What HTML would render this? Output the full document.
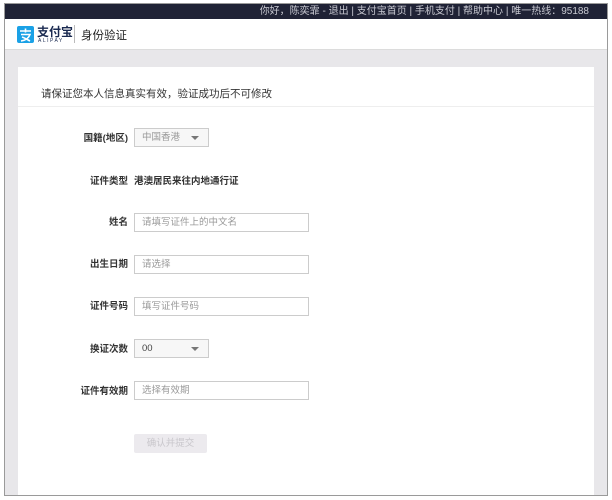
<!DOCTYPE html>
<html><head><meta charset="utf-8"><style>
*{margin:0;padding:0;box-sizing:border-box}
body{width:612px;height:500px;background:#fff;font-family:"Liberation Sans","Noto Sans CJK SC",sans-serif;position:relative;overflow:hidden}
.frame{position:absolute;left:4px;top:3px;width:604px;height:493px;border:1px solid #9a9a9a;background:#e8e7ea;overflow:hidden}
.top{position:absolute;left:0;top:0;width:100%;height:15px;background:#1f2235;color:#c9cad2;font-size:10px;line-height:15px;text-align:right;padding-right:18px}
.hdr{position:absolute;left:0;top:15px;width:100%;height:31px;background:#fff;border-bottom:1px solid #dcdcdc}
.card{position:absolute;left:13px;top:63px;width:576px;height:440px;background:#fff}
.tip{position:absolute;left:23px;top:19px;font-size:10.5px;color:#333}
.line{position:absolute;left:0;top:39px;width:100%;border-top:1px solid #eee}
.lab{position:absolute;right:466px;font-size:9.5px;color:#333;font-weight:bold;white-space:nowrap}
.in{position:absolute;left:116px;height:19px;border:1px solid #ccc;font-size:9.5px;color:#999;line-height:17px;padding-left:7px}
.sel{width:75px;background:#f7f7f7}
.sel:after{content:"";position:absolute;right:9px;top:7px;border:4px solid transparent;border-top:4px solid #777}
.txt{width:175px}
</style></head><body>
<div class="frame">
<div class="top">你好，陈奕霏 - 退出 | 支付宝首页 | 手机支付 | 帮助中心 | 唯一热线：95188</div>
<div class="hdr">
<svg style="position:absolute;left:12px;top:7px" width="17" height="17" viewBox="0 0 17 17"><rect width="17" height="17" rx="2" fill="#1aa1e6"/><path d="M3 5h11M8.5 2.5v4M4 8.5h9c-1.5 4-5 6-9 6.5M5 11c3 1 6 3 8 4" stroke="#fff" stroke-width="1.6" fill="none"/></svg>
<div style="position:absolute;left:32px;top:4px;font-size:12px;font-weight:bold;color:#1a2a50">支付宝</div>
<div style="position:absolute;left:33px;top:19px;font-size:5px;letter-spacing:1.5px;color:#1a2a50">ALIPAY</div>
<div style="position:absolute;left:69px;top:6px;height:18px;border-left:1px solid #bbb"></div>
<div style="position:absolute;left:76px;top:8px;font-size:11.5px;color:#222">身份验证</div>
</div>
<div class="card">
<div class="tip">请保证您本人信息真实有效，验证成功后不可修改</div>
<div class="line"></div>
<div class="lab" style="top:63px">国籍(地区)</div><div class="in sel" style="top:61px">中国香港</div>
<div class="lab" style="top:106px">证件类型</div><div style="position:absolute;left:116px;top:106px;font-size:9.5px;color:#333;font-weight:bold">港澳居民来往内地通行证</div>
<div class="lab" style="top:147px">姓名</div><div class="in txt" style="top:146px">请填写证件上的中文名</div>
<div class="lab" style="top:189px">出生日期</div><div class="in txt" style="top:188px">请选择</div>
<div class="lab" style="top:231px">证件号码</div><div class="in txt" style="top:230px">填写证件号码</div>
<div class="lab" style="top:274px">换证次数</div><div class="in sel" style="top:272px;color:#444">00</div>
<div class="lab" style="top:316px">证件有效期</div><div class="in txt" style="top:314px">选择有效期</div>
<div style="position:absolute;left:116px;top:367px;width:73px;height:19px;background:#eceaee;border-radius:2px;font-size:9.5px;color:#c9c7cc;text-align:center;line-height:19px">确认并提交</div>
</div>
</div>
</body></html>
